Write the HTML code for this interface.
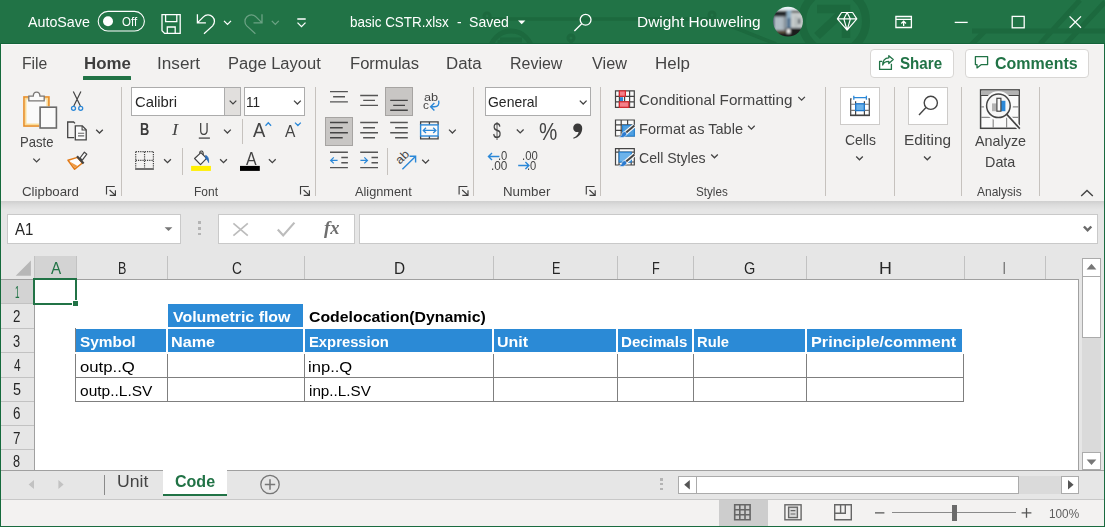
<!DOCTYPE html>
<html lang="en"><head><meta charset="utf-8"><title>basic CSTR.xlsx - Excel</title>
<style>
html,body{margin:0;padding:0;background:#e6e6e6}
#app{position:relative;width:1105px;height:527px;overflow:hidden;background:#e6e6e6;font-family:"Liberation Sans",sans-serif}
#app div{position:absolute;box-sizing:border-box}
.t{position:absolute;white-space:pre;line-height:1;transform-origin:0 50%}
#ic{position:absolute;left:0;top:0;width:1105px;height:527px}
.sep{width:1px;background:#c6c2be}
.combo{background:#fff;border:1px solid #acacac}
.sel{background:#c8c6c4;border:1px solid #a6a4a2}
.wbox{background:#fff;border:1px solid #cdcbc9}
.fbox{background:#fff;border:1px solid #c9c9c9}
.blue{background:#2b8ad6}
.ln{background:#7f7f7f}
.hl{background:#c2c2c2}
.sb{background:#fff;border:1px solid #ababab}

</style></head>
<body>
<div id="app">
<!-- title bar -->
<div style="left:0px;top:0px;width:1105px;height:44px;background:#217346;border-bottom:1px solid #14633a"></div>
<!-- ribbon -->
<div style="left:1px;top:44px;width:1103px;height:157px;background:#f3f2f1;border-top:1px solid #fbfafa"></div>
<div style="left:1px;top:201px;width:1103px;height:9px;background:linear-gradient(#cfcfcf,#dcdcdc 45%,#e6e6e6)"></div>
<div style="left:83px;top:76px;width:48px;height:4px;background:#217346;border-radius:0.5px"></div>
<div style="left:869.5px;top:48.5px;width:84px;height:29px;background:#fff;border:1px solid #d8d6d4;border-radius:4px"></div>
<div style="left:964.5px;top:48.5px;width:124px;height:29px;background:#fff;border:1px solid #d8d6d4;border-radius:4px"></div>
<div class="sep" style="left:120.5px;top:87px;width:1px;height:109px"></div>
<div class="sep" style="left:314.5px;top:87px;width:1px;height:109px"></div>
<div class="sep" style="left:473px;top:87px;width:1px;height:109px"></div>
<div class="sep" style="left:600px;top:87px;width:1px;height:109px"></div>
<div class="sep" style="left:825px;top:87px;width:1px;height:109px"></div>
<div class="sep" style="left:893.5px;top:87px;width:1px;height:109px"></div>
<div class="sep" style="left:961px;top:87px;width:1px;height:109px"></div>
<div class="sep" style="left:1038.5px;top:87px;width:1px;height:109px"></div>
<div class="sep" style="left:242.2px;top:118.5px;width:1px;height:25.7px"></div>
<div class="sep" style="left:182px;top:148px;width:1px;height:26.5px"></div>
<div class="sep" style="left:387px;top:148px;width:1px;height:26.8px"></div>
<div class="combo" style="left:131px;top:87px;width:109.5px;height:28.7px"></div>
<div style="left:224px;top:87px;width:16.5px;height:28.7px;background:#e1dfdd;border:1px solid #acacac"></div>
<div class="combo" style="left:243.5px;top:87px;width:61px;height:28.7px"></div>
<div class="combo" style="left:484.5px;top:87px;width:106px;height:28.7px"></div>
<div class="sel" style="left:385px;top:87px;width:28px;height:28.8px"></div>
<div class="sel" style="left:325px;top:117.2px;width:28px;height:28.6px"></div>
<div class="wbox" style="left:840px;top:87px;width:40px;height:37.5px"></div>
<div class="wbox" style="left:908px;top:87px;width:40px;height:37.5px"></div>
<!-- formula bar -->
<div class="fbox" style="left:7px;top:214px;width:174px;height:29.5px"></div>
<div class="fbox" style="left:218px;top:214px;width:137px;height:29.5px"></div>
<div class="fbox" style="left:358.5px;top:214px;width:739px;height:29.5px"></div>
<div style="left:198px;top:221.2px;width:3.2px;height:2.8px;background:#b4b4b4"></div>
<div style="left:198px;top:227px;width:3.2px;height:2.8px;background:#b4b4b4"></div>
<div style="left:198px;top:232.7px;width:3.2px;height:2.8px;background:#b4b4b4"></div>
<!-- grid -->
<div style="left:34px;top:279px;width:1044.5px;height:191.5px;background:#fff"></div>
<div style="left:1px;top:278.5px;width:1078px;height:1px;background:#a0a0a0"></div>
<div style="left:33.5px;top:279px;width:1px;height:191.5px;background:#a0a0a0"></div>
<div style="left:1078px;top:279px;width:1px;height:191.5px;background:#a0a0a0"></div>
<div style="left:34.2px;top:256px;width:41.6px;height:22.5px;background:#d3d3d3"></div>
<div style="left:1px;top:279.6px;width:32.5px;height:23.6px;background:#d3d3d3"></div>
<div class="hl" style="left:75.5px;top:256px;width:1px;height:22.5px"></div>
<div class="hl" style="left:167px;top:256px;width:1px;height:22.5px"></div>
<div class="hl" style="left:304px;top:256px;width:1px;height:22.5px"></div>
<div class="hl" style="left:493px;top:256px;width:1px;height:22.5px"></div>
<div class="hl" style="left:617px;top:256px;width:1px;height:22.5px"></div>
<div class="hl" style="left:693px;top:256px;width:1px;height:22.5px"></div>
<div class="hl" style="left:806px;top:256px;width:1px;height:22.5px"></div>
<div class="hl" style="left:963.5px;top:256px;width:1px;height:22.5px"></div>
<div class="hl" style="left:1044.5px;top:256px;width:1px;height:22.5px"></div>
<div class="hl" style="left:34px;top:256px;width:1px;height:22.5px"></div>
<div class="hl" style="left:1px;top:303px;width:33px;height:1px"></div>
<div class="hl" style="left:1px;top:327.5px;width:33px;height:1px"></div>
<div class="hl" style="left:1px;top:352px;width:33px;height:1px"></div>
<div class="hl" style="left:1px;top:376.8px;width:33px;height:1px"></div>
<div class="hl" style="left:1px;top:400.8px;width:33px;height:1px"></div>
<div class="hl" style="left:1px;top:424.8px;width:33px;height:1px"></div>
<div class="hl" style="left:1px;top:448.7px;width:33px;height:1px"></div>
<!-- table -->
<div class="blue" style="left:168px;top:304.3px;width:135px;height:22.3px"></div>
<div class="blue" style="left:75.8px;top:328.8px;width:90.2px;height:22.9px"></div>
<div class="blue" style="left:168px;top:328.8px;width:135px;height:22.9px"></div>
<div class="blue" style="left:304.8px;top:328.8px;width:187.5px;height:22.9px"></div>
<div class="blue" style="left:493.9px;top:328.8px;width:122.4px;height:22.9px"></div>
<div class="blue" style="left:618px;top:328.8px;width:73.9px;height:22.9px"></div>
<div class="blue" style="left:694px;top:328.8px;width:111.3px;height:22.9px"></div>
<div class="blue" style="left:807px;top:328.8px;width:154.9px;height:22.9px"></div>
<div class="ln" style="left:75.1px;top:328px;width:0.8px;height:24px"></div>
<div class="ln" style="left:75.2px;top:354px;width:0.9px;height:47.6px"></div>
<div class="ln" style="left:167.2px;top:354px;width:0.9px;height:47.6px"></div>
<div class="ln" style="left:304px;top:354px;width:0.9px;height:47.6px"></div>
<div class="ln" style="left:492.9px;top:354px;width:0.9px;height:47.6px"></div>
<div class="ln" style="left:616.9px;top:354px;width:0.9px;height:47.6px"></div>
<div class="ln" style="left:692.9px;top:354px;width:0.9px;height:47.6px"></div>
<div class="ln" style="left:806px;top:354px;width:0.9px;height:47.6px"></div>
<div class="ln" style="left:963px;top:354px;width:0.9px;height:47.6px"></div>
<div class="ln" style="left:75.2px;top:377px;width:888.7px;height:0.9px"></div>
<div class="ln" style="left:75.2px;top:400.8px;width:888.7px;height:0.9px"></div>
<div style="left:33px;top:278px;width:43.9px;height:26.7px;border:2.2px solid #217346"></div>
<div style="left:72px;top:300px;width:6px;height:6px;background:#217346;border:1px solid #fff;border-right:0;border-bottom:0"></div>
<!-- scrollbars -->
<div class="sb" style="left:1082px;top:258px;width:19px;height:18.5px"></div>
<div class="sb" style="left:1082px;top:276px;width:19px;height:61.5px"></div>
<div style="left:1082px;top:337.5px;width:19px;height:114.5px;background:#dadada"></div>
<div class="sb" style="left:1082px;top:451.5px;width:19px;height:18px"></div>
<!-- sheet tabs -->
<div style="left:1px;top:470px;width:1103px;height:1px;background:#a0a0a0"></div>
<div style="left:1px;top:498.5px;width:1103px;height:1px;background:#c8c8c8"></div>
<div style="left:1px;top:499.5px;width:1103px;height:26.6px;background:#f3f2f1"></div>
<div style="left:162.5px;top:470px;width:64px;height:26px;background:#fff;border-bottom:2px solid #217346"></div>
<div style="left:104px;top:475px;width:1px;height:19.5px;background:#8a8a8a"></div>
<div style="left:660px;top:478.3px;width:3px;height:2.4px;background:#b4b4b4"></div>
<div style="left:660px;top:483px;width:3px;height:2.4px;background:#b4b4b4"></div>
<div style="left:660px;top:487.8px;width:3px;height:2.4px;background:#b4b4b4"></div>
<div class="sb" style="left:678px;top:475.5px;width:19px;height:18.5px"></div>
<div class="sb" style="left:696px;top:475.5px;width:323px;height:18.5px"></div>
<div style="left:1019px;top:475.5px;width:42px;height:18.5px;background:#dadada"></div>
<div class="sb" style="left:1061px;top:475.5px;width:18px;height:18.5px"></div>
<!-- status bar -->
<div style="left:718.5px;top:499.5px;width:49px;height:26.5px;background:#cdcdcd"></div>
<div style="left:891.5px;top:512.4px;width:124.5px;height:1px;background:#8a8a8a"></div>
<div style="left:951.5px;top:505px;width:5.5px;height:15.5px;background:#6a6a6a"></div>
<!-- window border -->
<div style="left:0px;top:44px;width:1px;height:483px;background:#156a3c"></div>
<div style="left:1103.8px;top:44px;width:1.2px;height:483px;background:#1a6b40"></div>
<div style="left:0px;top:526px;width:1105px;height:1px;background:#1a6b40"></div>
<svg id="ic" viewBox="0 0 1105 527" fill="none" stroke-linecap="butt">
<defs><clipPath id="tb"><rect x="0" y="0" width="1105" height="43"/></clipPath><clipPath id="av"><circle cx="788" cy="21.6" r="14.9"/></clipPath><filter id="bl" x="-10%" y="-10%" width="120%" height="120%"><feGaussianBlur stdDeviation="0.8"/></filter></defs>
<!-- title bar background pattern -->
<g clip-path="url(#tb)" stroke="#1c693e" fill="none">
<circle cx="834" cy="21" r="32" stroke-width="8"/>
<path d="M817 9H846V38M846 9L817 36" stroke-width="8.5"/>
<path d="M490 19H713L776 44" stroke-width="3.6"/>
<circle cx="487" cy="16" r="3" stroke-width="3"/><circle cx="712" cy="15" r="3" stroke-width="3"/>
<circle cx="511" cy="52" r="21" stroke-width="5"/>
<path d="M500 40H522M500 40V50" stroke-width="5"/>
<circle cx="571" cy="38" r="3" stroke-width="3"/><path d="M571 41V45" stroke-width="3"/>
<path d="M972 31H1105M1080 0L1040 44M1105 2L1062 48M985 31L970 46" stroke-width="5"/>
</g>
<!-- title bar icons -->
<g stroke="#fff" stroke-width="1.3">
<rect x="98.2" y="11.4" width="46.2" height="19.6" rx="9.8" stroke-width="1.1"/>
<circle cx="108" cy="21.2" r="5" fill="#fff" stroke="none"/>
<path d="M162 14.7H180.2V33.4H164.6L162 30.8ZM165.6 14.7V21.6H176.8V14.7M167.3 33.4V27H175.2V33.4"/>
<path id="undo" d="M197.4 14.3V22.8H205.9M197.6 22.6L203.4 16.9A6.4 6.4 0 1 1 212.6 25.9L204 33.8"/>
<path d="M224 20.9L227.5 24.4L231 20.9"/>
<g opacity=".33"><path d="M262 14.3V22.8H253.5M261.8 22.6L256 16.9A6.4 6.4 0 1 0 246.8 25.9L255.4 33.8"/><path d="M271.8 20.9L275.3 24.4L278.8 20.9"/></g>
<path d="M297.3 19H305.7M297.5 22.6L301.5 26.6L305.5 22.6"/>
<path d="M518 20.4H525.4L521.7 24.2Z" fill="#fff" stroke="none"/>
<circle cx="585.6" cy="19.8" r="5.4"/><path d="M581.7 23.7L574.4 31"/>
<path d="M841.6 12.5H852.6L856.8 18.9L847.1 30.2L837.4 18.9ZM837.4 18.9H856.8M843.8 18.9L847.1 12.5L850.4 18.9M843.8 18.9L847.1 30.2L850.4 18.9" stroke-width="1.2" stroke-linejoin="round"/>
<path d="M895.9 16.5H911.4V27.5H895.9ZM895.9 19.3H911.4M903.65 26V21.3M901.3 23.5L903.65 21.2L906 23.5"/>
<path d="M954.7 22.4H967.7"/>
<rect x="1012.2" y="16.4" width="12" height="11.4"/>
<path d="M1069.6 16.4L1081 27.8M1081 16.4L1069.6 27.8"/>
</g>
<!-- avatar -->
<g clip-path="url(#av)" stroke="none"><g filter="url(#bl)">
<rect x="770" y="4" width="36" height="36" fill="#aab5bd"/>
<rect x="770" y="4" width="36" height="10.5" fill="#e9f3f6"/>
<rect x="786.2" y="10" width="5.2" height="17" fill="#8fb0c6"/>
<rect x="787" y="18" width="3.6" height="10" fill="#4f6f8e"/>
<path d="M770 12L777 10.8H786.6V16.6H770Z" fill="#24262a"/>
<rect x="770" y="17" width="5" height="14" fill="#56687a"/>
<rect x="775" y="17" width="11.4" height="13.6" fill="#bcc7cf"/>
<path d="M778 17V30M781.4 17V30" stroke="#8e9ca8" stroke-width="1"/>
<rect x="783.6" y="17" width="2.6" height="13" fill="#7d8790"/>
<path d="M791.4 10.6H800L803 12.8H791.4Z" fill="#3a3a38"/>
<rect x="791" y="12.8" width="15" height="14.6" fill="#c5caca"/>
<rect x="795.6" y="16.4" width="1" height="10" fill="#9aa2a4"/>
<rect x="798.3" y="18.6" width="1.8" height="5.4" fill="#2a373e"/>
<path d="M770 30.6H786V28H806V40H770Z" fill="#1a1e1b"/>
<rect x="776" y="30.6" width="10" height="2.2" fill="#6a5a46"/>
<rect x="786.8" y="29" width="3.6" height="4.4" fill="#f4f4f4"/>
</g></g>
<!-- share / comments icons -->
<g stroke="#217346" stroke-width="1.3" stroke-linejoin="round">
<path d="M882.2 61.4H879.6V69.4H891.4V63.8"/>
<path d="M888.8 55.7L893.2 59.6L888.8 63.5V61.4C885.6 61.4 883.6 62.6 882.7 65C882.7 60.8 885 58 888.8 57.8Z"/>
<path d="M975.4 56.7H987.6V64.6H981.4L977 67.9V64.6H975.4Z"/>
</g>
<!-- clipboard group -->
<g>
<rect x="24" y="97" width="24.9" height="29" fill="#fafafa" stroke="#e8912d" stroke-width="1.7"/>
<rect x="25.7" y="98.7" width="21.5" height="25.6" fill="none" stroke="#fbdc96" stroke-width="1.5"/>
<path d="M28.8 100.8V96.1H33.3C33.3 93.5 34.7 92.1 36.6 92.1C38.5 92.1 39.9 93.5 39.9 96.1H44.2V100.8Z" fill="#fafafa" stroke="#797775" stroke-width="1.3"/>
<rect x="39.2" y="106.3" width="18" height="22.6" fill="#f3f2f1" stroke="none"/>
<rect x="40.1" y="107.2" width="16.3" height="20.8" fill="#fafafa" stroke="#6a6a6a" stroke-width="1.6"/>
<path d="M33.3 158.6L36.6 161.9L39.9 158.6" stroke="#444" stroke-width="1.3"/>
<!-- scissors -->
<path d="M73.3 91.6L80.4 106M80.9 91.6L73.8 106" stroke="#444" stroke-width="1.2"/>
<circle cx="73.5" cy="108.3" r="2" stroke="#2b88d8" stroke-width="1.3"/><circle cx="80.7" cy="108.3" r="2" stroke="#2b88d8" stroke-width="1.3"/>
<!-- copy -->
<path d="M74.2 137.6H67.7V122H73.6L75 123.4" stroke="#444" stroke-width="1.3"/>
<path d="M75.3 125.8H82.3L86.2 129.8V139.9H75.3Z" fill="#fafafa" stroke="#444" stroke-width="1.3"/>
<path d="M82.1 126V130H86" stroke="#444" stroke-width="1.1"/>
<path d="M78 133.3H84.2M78 135.9H84.2" stroke="#666" stroke-width="1.1"/>
<path d="M96.2 129.7L99.5 133L102.8 129.7" stroke="#444" stroke-width="1.3"/>
<!-- format painter -->
<path d="M68 160.2L77.4 157.4L82.4 163L74.6 169.2Z" fill="#fdfdfd" stroke="#e27a17" stroke-width="1.5" stroke-linejoin="round"/>
<path d="M69.6 161.6L74.8 168.2L77.6 166Z" fill="#ee9a44" stroke="none"/>
<path d="M77 156.2L83.6 163.4" stroke="#444" stroke-width="2.2"/>
<path d="M80 158L84.4 152.2L86.8 154.1L82.3 160.2Z" fill="#fafafa" stroke="#444" stroke-width="1.2" stroke-linejoin="round"/>
<!-- launchers -->
<g id="launch" stroke="#3f3f3f" stroke-width="1.15"><path d="M106.5 194.6V186.5H114.8M109.6 190L115.2 195.2M115.4 190.3V195.4H109.7"/></g>
</g>
<!-- font group -->
<g stroke="#444" stroke-width="1.3">
<path d="M229.7 100.6L233 103.9L236.3 100.6M294 100.6L297.4 104L300.8 100.6M579.8 100.6L583.2 104L586.6 100.6"/>
<path d="M198.8 138.1H209.9"/>
<path d="M224 129.6L227.4 133L230.8 129.6"/>
<path d="M265.5 125.7L268.3 122.8L271.1 125.7M295 122.6L297.9 125.5L300.8 122.6" stroke="#2b88d8" stroke-width="1.3"/>
<path d="M135.7 151.7H153.4M135.7 160.4H153.4M135.7 151.7V168M144.55 151.7V168M153.4 151.7V168" stroke="#444" stroke-width="1.2" stroke-dasharray="1.25 1"/>
<path d="M135.1 169H153.9" stroke-width="1.5"/>
<path d="M164.1 159.2L167.5 162.6L170.9 159.2M220.1 159.2L223.5 162.6L226.9 159.2M268.9 159.2L272.3 162.6L275.7 159.2"/>
<path d="M194.6 158.5L200.9 152.6L206.6 158.3L200.5 164.6Z" fill="#fafafa" stroke-linejoin="round" stroke-width="1.2"/>
<path d="M199.8 153.6C199.3 151.6 200.6 150.6 201.8 151.1C203 151.6 203.4 153 203.2 155" stroke-width="1.1"/>
<path d="M205.6 155.4C207.8 156 208.9 158.6 208.6 162.6C208 160.6 207 159.4 205.8 158.8Z" fill="#2b6cb8" stroke="#2b6cb8" stroke-width=".8"/>
<rect x="191.1" y="165.9" width="19.8" height="5" fill="#ffef00" stroke="none"/>
<rect x="240" y="165.9" width="19.8" height="5" fill="#000" stroke="none"/>
<use href="#launch" x="194" y="0"/>
</g>
<!-- alignment group -->
<g stroke="#555" stroke-width="1.4">
<path d="M330 91.6H347.9M333.1 96.7H345M330 101.9H347.9"/>
<path d="M360.2 95.5H378M363.2 100.4H375M360.2 105.4H378"/>
<path d="M390.2 100.4H407.8M393.2 105.4H405M390.2 110.3H407.8" stroke="#444"/>
<path d="M330 122.5H347.9M330 127.8H342.7M330 132.7H347.9M330 137.7H342.7" stroke="#444" stroke-width="1.6"/>
<path d="M360.2 122.5H378M363.1 127.8H375M360.2 132.7H378M363.1 137.7H375"/>
<path d="M390.2 122.5H407.8M395.1 127.8H407.8M390.2 132.7H407.8M395.1 137.7H407.8"/>
<path d="M438.6 100.6C439.6 104.4 438 106.8 434.6 106.8H431M434.4 103L430.6 106.8L434.4 110.6" stroke="#2b88d8" stroke-width="1.4"/>
<path d="M420.6 125V121.9H438.1V125M429.4 121.9V125M420.6 136V138.9H438.1V136M429.4 136V138.9" stroke="#444" stroke-width="1.3"/>
<rect x="420.6" y="124.9" width="17.5" height="11.1" stroke="#2b88d8" stroke-width="1.4" fill="#fafafa"/>
<path d="M423.4 130.4H435.8M426 127.8L423.3 130.4L426 133M433.2 127.8L435.9 130.4L433.2 133" stroke="#2b88d8" stroke-width="1.3"/>
<path d="M449 129.6L452.4 133L455.8 129.6M422.2 159.8L425.6 163.2L429 159.8" stroke="#444" stroke-width="1.3"/>
<path d="M330 152.2H347.9M341.3 157.5H347.9M341.3 162.7H347.9M330 167.6H347.9"/>
<path d="M360.2 152.2H378M371.5 157.5H378M371.5 162.7H378M360.2 167.6H378"/>
<path d="M330.8 160.4H337.6M333.8 157.4L330.7 160.4L333.8 163.4M360.4 160.4H367.3M364.3 157.4L367.4 160.4L364.3 163.4" stroke="#2b88d8" stroke-width="1.3"/>
<path d="M402.4 169.3L415.4 156.5M409.6 156.3H415.6V162.4" stroke="#2b88d8" stroke-width="1.4"/>
<use href="#launch" x="352.6" y="0"/>
</g>
<!-- number group -->
<g>
<path d="M516.8 129.5L520.2 132.9L523.6 129.5" stroke="#444" stroke-width="1.3"/>
<path d="M577.7 123.4A4.4 4.4 0 0 1 582.2 127.9C582.4 133 579 137 573.6 138.8L573.2 137.8C576.4 136.4 578.2 134.4 578.6 132C575.6 132.6 573.2 130.6 573.2 127.9A4.4 4.4 0 0 1 577.7 123.4Z" fill="#3a3a3a" stroke="none"/>
<path d="M488.6 156.5H499.4M492 153.1L488.5 156.5L492 159.9M518.2 165.5H528.8M525.4 162.1L528.9 165.5L525.4 168.9" stroke="#2b88d8" stroke-width="1.4"/>
<use href="#launch" x="479.8" y="0"/>
</g>
<!-- styles group -->
<g stroke="#444" stroke-width="1.2">
<path d="M615.5 90.9H634.3V107.3H615.5ZM615.5 96.3H634.3M615.5 101.8H634.3M619.4 90.9V107.3M624.6 90.9V107.3M629.6 90.9V107.3" fill="#fafafa"/>
<rect x="619.4" y="90.9" width="6" height="5.4" fill="#f4808a" stroke="#d9262e"/>
<rect x="619.9" y="97.2" width="3.2" height="3.8" fill="#2b88d8" stroke="none"/>
<rect x="619.4" y="101.8" width="9.4" height="5.5" fill="#f4808a" stroke="#d9262e"/>
<path d="M615.5 120H634.3V136H615.5ZM615.5 124.8H634.3M615.5 130.4H634.3M621.2 120V136M627.6 120V136" fill="#fafafa"/>
<rect x="622.6" y="125.4" width="11.7" height="10.6" fill="#4f9fe0" stroke="#2b88d8"/>
<path d="M615.5 148.7H634.3V165H615.5ZM615.5 152.2H634.3M619 148.7V165M631.2 152.2V165M619 162H634.3" fill="#fafafa"/>
<rect x="619.2" y="152.2" width="12" height="9.8" fill="#6db3ea" stroke="#2b88d8"/>
<g id="brush"><path d="M634.6 125.4L623.6 134.6" stroke="#fafafa" stroke-width="4.2"/><path d="M634.4 125.6L624.4 134" stroke="#444" stroke-width="2"/><path d="M625.6 131.6C623.4 131.4 622 132.6 621.6 134.6C621.2 136 620 136.8 618.6 137C621.6 138.2 625.4 137.6 626.8 134.2Z" fill="#2b7bd0" stroke="#fafafa" stroke-width=".6"/></g>
<use href="#brush" x="0" y="29"/>
<path d="M798.3 96.9L801.6 100.2L804.9 96.9M748.1 125.8L751.4 129.1L754.7 125.8M711.2 154.5L714.5 157.8L717.8 154.5" stroke-width="1.3"/>
</g>
<!-- cells / editing / analyze -->
<g stroke="#444" stroke-width="1.3">
<path d="M851.6 98.9H850.7V115.3H869.3V98.9H868.4M855.6 101.2V115.3M864.4 101.2V115.3" stroke-width="1.2"/>
<path d="M850.7 104.3H869.3M850.7 110.4H869.3" stroke="#777" stroke-width="1.1"/>
<path d="M850.1 115.4H869.9" stroke-width="1.5"/>
<rect x="855.7" y="103.8" width="8.6" height="6.8" fill="#6db3ea" stroke="#1e78cc" stroke-width="1.3"/>
<path d="M853.8 97.7H866.4M853.8 95.7V99.7M866.4 95.7V99.7" stroke="#2b88d8" stroke-width="1.3"/>
<path d="M856.2 156.5L859.5 159.8L862.8 156.5M924 156.5L927.3 159.8L930.6 156.5"/>
<circle cx="930.8" cy="102.8" r="6.6" stroke-width="1.4"/><path d="M926 107.6L919 115" stroke-width="1.4"/>
<rect x="980.6" y="89.9" width="38.6" height="38.4" fill="#fafafa" stroke-width="1.5"/>
<rect x="981.3" y="90.6" width="37.2" height="4.4" fill="#b3b3b3" stroke="none"/>
<path d="M981 106.8H1019M981 117.4H1019M993.2 95.4V128M1006.6 95.4V128" stroke="#8c8c8c" stroke-width="1.2"/><path d="M981 95.5H1019" stroke-width="1.2"/>
<path d="M1007 114.6L1019.6 128.4" stroke="#fafafa" stroke-width="4.4"/>
<circle cx="998.4" cy="105.8" r="12.6" fill="#f6f6f6" stroke="#fafafa" stroke-width="3.8"/>
<circle cx="998.4" cy="105.8" r="11.8" fill="#f6f6f6" stroke-width="1.5"/>
<path d="M1006.8 114.4L1019.8 128.6" stroke-width="1.7"/>
<rect x="992" y="103.4" width="4.6" height="7.8" fill="#b3b3b3" stroke="none"/>
<rect x="1001" y="100.8" width="4.4" height="10.4" fill="#2b88d8" stroke="none"/>
<rect x="996.9" y="98.3" width="4" height="12.9" fill="#fafafa" stroke-width="1.2"/>
<path d="M1081.2 196L1087 190.4L1092.8 196" stroke-width="1.4"/>
</g>
<!-- formula bar -->
<g>
<path d="M164.6 227.2H172.4L168.5 231Z" fill="#777"/>
<path d="M233.4 223.3L247.8 235.7M247.8 223.3L233.4 235.7" stroke="#bcbcbc" stroke-width="1.7"/>
<path d="M277.8 229.4L283.2 235.4L294.4 222.6" stroke="#bcbcbc" stroke-width="2.2"/>
<path d="M1083.9 226.5L1087.6 230.3L1091.3 226.5" stroke="#6a6a6a" stroke-width="2.5"/>
<path d="M30.9 260.6V275.8H15.7Z" fill="#b7b7b7"/>
</g>
<!-- scrollbars -->
<g fill="#777">
<path d="M1086.6 269.4L1091.5 263.8L1096.4 269.4Z"/>
<path d="M1086.6 459.4L1091.5 465L1096.4 459.4Z"/>
<path d="M689.8 480V489.4L684.2 484.7Z" fill="#555"/>
<path d="M1068 480V489.4L1073.6 484.7Z" fill="#555"/>
<path d="M34 480V489L28.6 484.5ZM58.4 480V489L63.6 484.5Z" fill="#c2c2c2"/>
</g>
<!-- sheet tab plus -->
<g stroke="#767676" stroke-width="1.3"><circle cx="270" cy="484.5" r="9.2"/><path d="M264.8 484.5H275.2M270 479.3V489.7" stroke-width="1.5"/></g>
<!-- status bar -->
<g stroke="#666" stroke-width="1.4">
<path d="M734.7 504.8H750.1V519.8H734.7ZM734.7 509.8H750.1M734.7 514.8H750.1M739.8 504.8V519.8M745 504.8V519.8" stroke-width="1.6"/>
<rect x="784.9" y="504.8" width="16.2" height="15" />
<rect x="788.6" y="507.2" width="8.8" height="10.4" fill="#d9d9d9"/>
<path d="M790.6 510.6H795.4M790.6 514H795.4" stroke-width="1.1"/>
<path d="M834.7 504.8H851.3V519.8H834.7ZM834.7 513.2H845.3V504.8M840.6 504.8V513.2"/>
<path d="M875 512.8H884.4M1021.6 512.8H1031.4M1026.5 507.9V517.7" stroke="#555" stroke-width="1.3"/>
</g>
</svg>
<div id="labels">
<span class="t" style="left:27.92px;top:14px;font-size:15px;color:#fff;transform:scaleX(0.9510)">AutoSave</span>
<span class="t" style="left:122.12px;top:16px;font-size:12px;color:#fff;transform:scaleX(0.9576)">Off</span>
<span class="t" style="left:349.63px;top:14px;font-size:15px;color:#fff;transform:scaleX(0.8965)">basic CSTR.xlsx</span>
<span class="t" style="left:457.09px;top:14px;font-size:15px;color:#fff;transform:scaleX(0.9200)">-</span>
<span class="t" style="left:468.83px;top:14px;font-size:15px;color:#fff;transform:scaleX(0.9388)">Saved</span>
<span class="t" style="left:636.51px;top:14px;font-size:15px;color:#fff;transform:scaleX(1.0292)">Dwight Houweling</span>
<span class="t" style="left:22.28px;top:56px;font-size:16px;color:#444;transform:scaleX(0.9829)">File</span>
<span class="t" style="left:83.65px;top:56px;font-size:16px;color:#3e3e3e;transform:scaleX(1.0537);font-weight:bold">Home</span>
<span class="t" style="left:156.67px;top:56px;font-size:16px;color:#444;transform:scaleX(1.0747)">Insert</span>
<span class="t" style="left:227.59px;top:56px;font-size:16px;color:#444;transform:scaleX(1.0325)">Page Layout</span>
<span class="t" style="left:349.78px;top:56px;font-size:16px;color:#444;transform:scaleX(1.0363)">Formulas</span>
<span class="t" style="left:446.18px;top:56px;font-size:16px;color:#444;transform:scaleX(1.0540)">Data</span>
<span class="t" style="left:510.27px;top:56px;font-size:16px;color:#444;transform:scaleX(0.9981)">Review</span>
<span class="t" style="left:591.71px;top:56px;font-size:16px;color:#444;transform:scaleX(1.0146)">View</span>
<span class="t" style="left:654.94px;top:56px;font-size:16px;color:#444;transform:scaleX(1.0574)">Help</span>
<span class="t" style="left:899.93px;top:56px;font-size:16px;color:#217346;transform:scaleX(0.9471);font-weight:bold">Share</span>
<span class="t" style="left:995.37px;top:56px;font-size:16px;color:#217346;transform:scaleX(0.9995);font-weight:bold">Comments</span>
<span class="t" style="left:20.31px;top:134px;font-size:15px;color:#444;transform:scaleX(0.8710)">Paste</span>
<span class="t" style="left:21.53px;top:185px;font-size:13.5px;color:#444;transform:scaleX(0.9849)">Clipboard</span>
<span class="t" style="left:134.66px;top:94px;font-size:15px;color:#262626;transform:scaleX(0.9889)">Calibri</span>
<span class="t" style="left:246.35px;top:94px;font-size:15px;color:#262626;transform:scaleX(0.9062)">11</span>
<span class="t" style="left:194.21px;top:185px;font-size:13.5px;color:#444;transform:scaleX(0.8871)">Font</span>
<span class="t" style="left:354.72px;top:185px;font-size:13.5px;color:#444;transform:scaleX(0.9443)">Alignment</span>
<span class="t" style="left:487.71px;top:94px;font-size:15px;color:#262626;transform:scaleX(0.9319)">General</span>
<span class="t" style="left:502.71px;top:185px;font-size:13.5px;color:#444;transform:scaleX(0.9858)">Number</span>
<span class="t" style="left:639.45px;top:92px;font-size:15px;color:#444;transform:scaleX(1.0170)">Conditional Formatting</span>
<span class="t" style="left:639.18px;top:121px;font-size:15px;color:#444;transform:scaleX(0.9697)">Format as Table</span>
<span class="t" style="left:639.48px;top:150px;font-size:15px;color:#444;transform:scaleX(0.9403)">Cell Styles</span>
<span class="t" style="left:696.22px;top:185px;font-size:13.5px;color:#444;transform:scaleX(0.8623)">Styles</span>
<span class="t" style="left:844.50px;top:132px;font-size:15px;color:#444;transform:scaleX(0.9274)">Cells</span>
<span class="t" style="left:904.49px;top:132px;font-size:15px;color:#444;transform:scaleX(1.0262)">Editing</span>
<span class="t" style="left:974.92px;top:133px;font-size:15px;color:#444;transform:scaleX(0.9570)">Analyze</span>
<span class="t" style="left:984.59px;top:154px;font-size:15px;color:#444;transform:scaleX(0.9580)">Data</span>
<span class="t" style="left:977.11px;top:185px;font-size:13.5px;color:#444;transform:scaleX(0.8884)">Analysis</span>
<span class="t" style="left:14.77px;top:222px;font-size:15.6px;color:#262626;transform:scaleX(0.9605)">A1</span>
<span class="t" style="left:117.54px;top:260px;font-size:16.2px;color:#262626;transform:scaleX(0.7722)">B</span>
<span class="t" style="left:232.10px;top:260px;font-size:16.2px;color:#262626;transform:scaleX(0.8465)">C</span>
<span class="t" style="left:393.72px;top:260px;font-size:16.2px;color:#262626;transform:scaleX(0.9503)">D</span>
<span class="t" style="left:552.16px;top:260px;font-size:16.2px;color:#262626;transform:scaleX(0.7814)">E</span>
<span class="t" style="left:652.37px;top:260px;font-size:16.2px;color:#262626;transform:scaleX(0.7861)">F</span>
<span class="t" style="left:744.47px;top:260px;font-size:16.2px;color:#262626;transform:scaleX(0.8977)">G</span>
<span class="t" style="left:878.75px;top:260px;font-size:16.2px;color:#262626;transform:scaleX(1.1010)">H</span>
<span class="t" style="left:50.56px;top:260px;font-size:16.4px;color:#217346;transform:scaleX(0.9305)">A</span>
<span class="t" style="left:1003.42px;top:260px;font-size:16.2px;color:#262626;transform:scaleX(0.5111)">I</span>
<span class="t" style="left:14.67px;top:285px;font-size:16px;color:#217346;transform:scaleX(0.5062)">1</span>
<span class="t" style="left:13.36px;top:309px;font-size:16px;color:#262626;transform:scaleX(0.8320)">2</span>
<span class="t" style="left:13.37px;top:334px;font-size:16px;color:#262626;transform:scaleX(0.7987)">3</span>
<span class="t" style="left:13.86px;top:358px;font-size:16px;color:#262626;transform:scaleX(0.7413)">4</span>
<span class="t" style="left:13.24px;top:382px;font-size:16px;color:#262626;transform:scaleX(0.8971)">5</span>
<span class="t" style="left:13.34px;top:406px;font-size:16px;color:#262626;transform:scaleX(0.8403)">6</span>
<span class="t" style="left:13.34px;top:431px;font-size:16px;color:#262626;transform:scaleX(0.8345)">7</span>
<span class="t" style="left:13.45px;top:454px;font-size:16px;color:#262626;transform:scaleX(0.7933)">8</span>
<span class="t" style="left:173.04px;top:309px;font-size:15px;color:#fff;transform:scaleX(1.0627);font-weight:bold">Volumetric flow</span>
<span class="t" style="left:308.98px;top:309px;font-size:15px;color:#000;transform:scaleX(1.0556);font-weight:bold">Codelocation(Dynamic)</span>
<span class="t" style="left:80.14px;top:334px;font-size:15px;color:#fff;transform:scaleX(1.0260);font-weight:bold">Symbol</span>
<span class="t" style="left:171.32px;top:334px;font-size:15px;color:#fff;transform:scaleX(1.0793);font-weight:bold">Name</span>
<span class="t" style="left:308.81px;top:334px;font-size:15px;color:#fff;transform:scaleX(0.9867);font-weight:bold">Expression</span>
<span class="t" style="left:497.44px;top:334px;font-size:15px;color:#fff;transform:scaleX(1.0635);font-weight:bold">Unit</span>
<span class="t" style="left:621.20px;top:334px;font-size:15px;color:#fff;transform:scaleX(1.0070);font-weight:bold">Decimals</span>
<span class="t" style="left:697.42px;top:334px;font-size:15px;color:#fff;transform:scaleX(0.9831);font-weight:bold">Rule</span>
<span class="t" style="left:810.52px;top:334px;font-size:15px;color:#fff;transform:scaleX(1.0810);font-weight:bold">Principle/comment</span>
<span class="t" style="left:80.10px;top:359px;font-size:15px;color:#000;transform:scaleX(1.1152)">outp..Q</span>
<span class="t" style="left:80.17px;top:383px;font-size:15px;color:#000;transform:scaleX(1.0341)">outp..L.SV</span>
<span class="t" style="left:308.07px;top:359px;font-size:15px;color:#000;transform:scaleX(1.1059)">inp..Q</span>
<span class="t" style="left:308.77px;top:383px;font-size:15px;color:#000;transform:scaleX(1.0155)">inp..L.SV</span>
<span class="t" style="left:117.39px;top:474px;font-size:16px;color:#444;transform:scaleX(1.1001)">Unit</span>
<span class="t" style="left:174.96px;top:474px;font-size:16px;color:#217346;transform:scaleX(1.0017);font-weight:bold">Code</span>
<span class="t" style="left:1048.87px;top:508px;font-size:12.4px;color:#5e5e5e;transform:scaleX(0.9512)">100%</span>
<span class="t" style="left:140.29px;top:122px;font-size:15.8px;color:#3b3b3b;transform:scaleX(0.8131);font-weight:bold">B</span>
<span class="t" style="left:171.59px;top:121px;font-size:17px;color:#444;transform:scaleX(1.0783);font-style:italic;font-family:'Liberation Serif', serif">I</span>
<span class="t" style="left:199.07px;top:122px;font-size:15.8px;color:#444;transform:scaleX(0.8537)">U</span>
<span class="t" style="left:252.96px;top:120px;font-size:20.4px;color:#444;transform:scaleX(0.9034)">A</span>
<span class="t" style="left:284.97px;top:124px;font-size:15.6px;color:#444;transform:scaleX(0.9966)">A</span>
<span class="t" style="left:245.57px;top:150px;font-size:18.4px;color:#444;transform:scaleX(0.8652)">A</span>
<span class="t" style="left:493.27px;top:121px;font-size:21.5px;color:#444;transform:scaleX(0.6587)">$</span>
<span class="t" style="left:538.88px;top:121px;font-size:23.5px;color:#444;transform:scaleX(0.8763)">%</span>
<span class="t" style="left:423.66px;top:92px;font-size:11.4px;color:#444;transform:scaleX(1.1149)">ab</span>
<span class="t" style="left:423.46px;top:100px;font-size:11.4px;color:#444;transform:scaleX(1.0378)">c</span>
<span class="t" style="left:498.03px;top:150px;font-size:12px;color:#444;transform:scaleX(0.9347)">.0</span>
<span class="t" style="left:490.81px;top:160px;font-size:12px;color:#444;transform:scaleX(0.9781)">.00</span>
<span class="t" style="left:521.61px;top:150px;font-size:12px;color:#444;transform:scaleX(0.9422)">.00</span>
<span class="t" style="left:527.41px;top:160px;font-size:12px;color:#444;transform:scaleX(0.9293)">.0</span>
<span class="t" style="left:396.60px;top:156px;font-size:11.6px;color:#444;transform:rotate(-45deg) scaleX(1.0847)">ab</span>
<span class="t" style="left:323.74px;top:218px;font-size:19px;color:#6e6e6e;transform:scaleX(0.9739);font-weight:bold;font-style:italic;font-family:'Liberation Serif', serif">fx</span>
</div>
</div>
</body></html>
